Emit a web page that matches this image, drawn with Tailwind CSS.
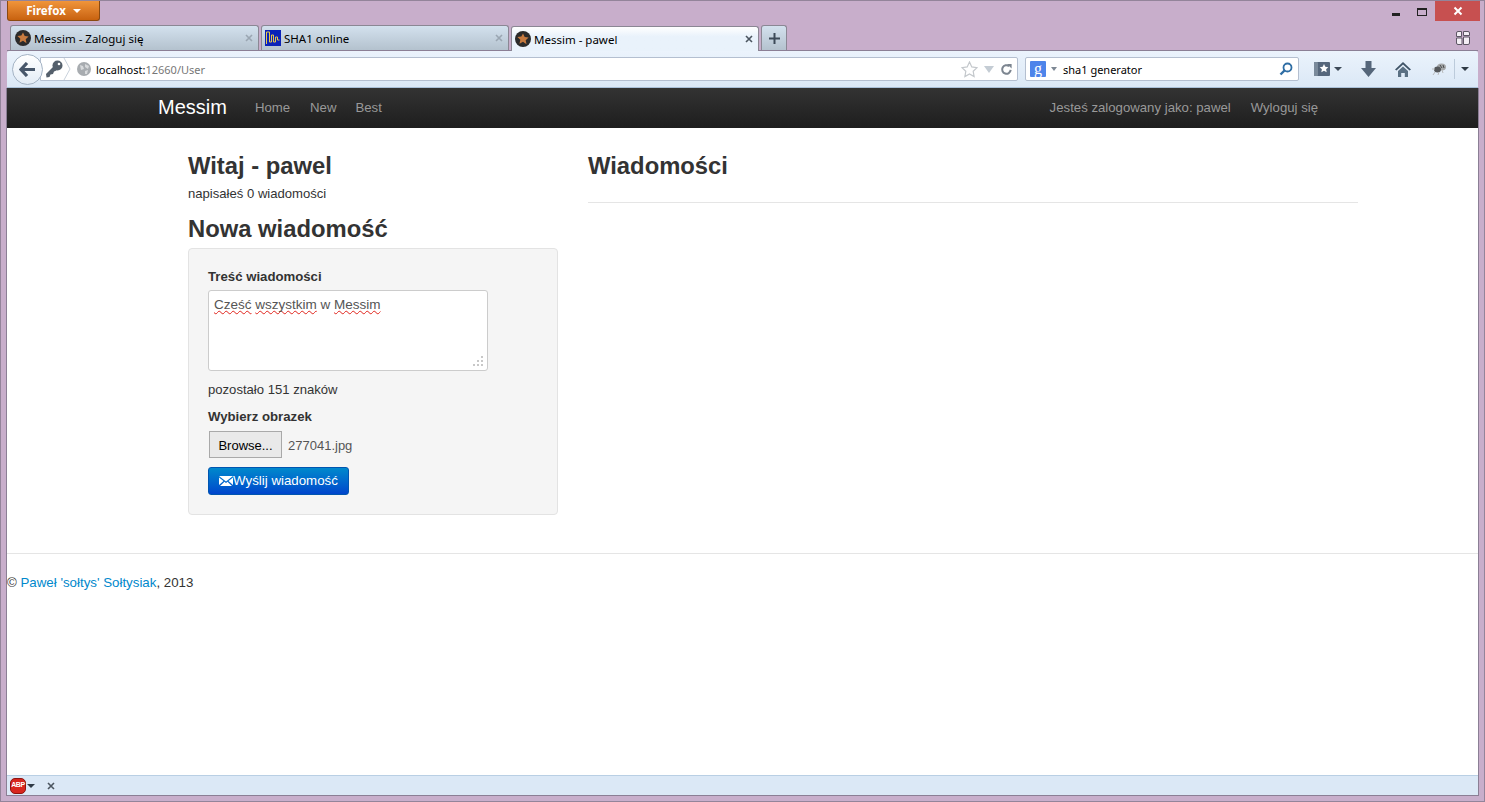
<!DOCTYPE html>
<html lang="en">
<head>
    <meta charset="UTF-8">
    <title>Messim - pawel</title>
    <script src="https://cdn.jsdelivr.net/npm/@tailwindcss/browser@4"></script>
</head>
<body class="h-screen overflow-hidden bg-[#c8aecb] font-['Liberation_Sans',sans-serif] text-[13.2px] text-[#333]">
    <div class="h-full flex flex-col border border-[#93849a] px-[6px] pb-[5px]">

        <!-- Title row -->
        <div class="h-[24px] flex items-start justify-between shrink-0">
            <div class="w-[93px] h-[20px] flex items-center justify-center gap-[7px] rounded-b-[3px] border border-t-0 border-[#8a4a10] bg-gradient-to-b from-[#f0953a] to-[#c8620e] font-['Noto_Sans',sans-serif] font-bold text-[11.5px] text-white">
                Firefox
                <span class="w-0 h-0 border-x-[4px] border-x-transparent border-t-[4px] border-t-white"></span>
            </div>
            <div class="flex items-start -mr-[2px]">
                <span class="w-[8px] h-[3px] bg-[#222] mt-[12px] mr-[17px]"></span>
                <span class="w-[10px] h-[8px] border border-t-[2px] border-[#222] mt-[7px] mr-[8px]"></span>
                <div class="w-[45px] h-[20px] bg-[#c75050] flex items-center justify-center">
                    <svg width="10" height="10" viewBox="0 0 10 10"><path d="M1.5 1.5l7 7M8.5 1.5l-7 7" stroke="#fff" stroke-width="2"/></svg>
                </div>
            </div>
        </div>

        <!-- Tabs -->
        <div class="h-[26px] flex items-end shrink-0 pl-[3px] gap-[2px] border-b border-[#8b7f95]">
            <div class="w-[249px] h-[25px] flex items-center pl-[4px] pr-[5px] rounded-t-[3px] border border-b-0 border-[#8b8794] bg-gradient-to-b from-[#d3e1ee] to-[#b4c2ce] font-['Noto_Sans',sans-serif] text-[11.5px] text-black">
                <svg width="16" height="16" viewBox="0 0 16 16" class="mr-[3px]"><circle cx="8" cy="8" r="8" fill="#2b2b2b"/><path d="M8 2.5l1.7 3.6 3.9.5-2.9 2.7.8 3.9L8 10.8l-3.5 1.9.8-3.9-2.9-2.7 3.9-.5z" fill="#c67a3f"/></svg>
                <span class="flex-1 pt-[2px]">Messim - Zaloguj się</span>
                <svg width="8" height="8" viewBox="0 0 8 8"><path d="M1 1l6 6M7 1L1 7" stroke="#9aa6b2" stroke-width="1.6"/></svg>
            </div>
            <div class="w-[248px] h-[25px] flex items-center pl-[3px] pr-[5px] rounded-t-[3px] border border-b-0 border-[#8b8794] bg-gradient-to-b from-[#d3e1ee] to-[#b4c2ce] font-['Noto_Sans',sans-serif] text-[11.5px] text-black">
                <svg width="16" height="16" viewBox="0 0 16 16" class="mr-[3px]"><rect width="16" height="16" fill="#0a22b8"/><path d="M1.500 14V2h3v10h2V5h2v7h2V7h2v3h2" fill="none" stroke="#e6c84a" stroke-width="1"/></svg>
                <span class="flex-1 pt-[2px]">SHA1 online</span>
                <svg width="8" height="8" viewBox="0 0 8 8"><path d="M1 1l6 6M7 1L1 7" stroke="#9aa6b2" stroke-width="1.6"/></svg>
            </div>
            <div class="w-[248px] h-[25px] -mb-px flex items-center pl-[3px] pr-[5px] rounded-t-[3px] border border-b-0 border-[#8b8794] bg-gradient-to-b from-white to-[#e9f2fb] to-40% font-['Noto_Sans',sans-serif] text-[11.5px] text-black">
                <svg width="16" height="16" viewBox="0 0 16 16" class="mr-[3px]"><circle cx="8" cy="8" r="8" fill="#2b2b2b"/><path d="M8 2.5l1.7 3.6 3.9.5-2.9 2.7.8 3.9L8 10.8l-3.5 1.9.8-3.9-2.9-2.7 3.9-.5z" fill="#c67a3f"/></svg>
                <span class="flex-1 pt-[2px]">Messim - pawel</span>
                <svg width="8" height="8" viewBox="0 0 8 8"><path d="M1 1l6 6M7 1L1 7" stroke="#4b5560" stroke-width="1.6"/></svg>
            </div>
            <div class="w-[26px] h-[25px] flex items-center justify-center rounded-t-[3px] border border-b-0 border-[#8b8794] bg-gradient-to-b from-[#d3e1ee] to-[#b4c2ce]">
                <svg width="11" height="11" viewBox="0 0 11 11"><path d="M5.5 0v11M0 5.5h11" stroke="#3d4a58" stroke-width="2"/></svg>
            </div>
            <div class="flex-1 h-full flex items-center justify-end pr-[8px]">
                <svg width="14" height="14" viewBox="0 0 14 14"><path d="M2 .5h3.500v5H.5V2A1.500 1.500 0 0 1 2 .5zM7.500 .5H12A1.500 1.500 0 0 1 13.500 2v2.500h-6zM.5 7H6v6.500H2A1.500 1.500 0 0 1 .5 12zM7.500 6H13.500v6a1.500 1.500 0 0 1-1.500 1.500H7.500z" fill="#f4eef5" stroke="#5d5664"/></svg>
            </div>
        </div>

        <!-- Navigation toolbar -->
        <div class="h-[37px] flex items-center shrink-0 pl-[5px] pr-[9px] rounded-t-[2px] bg-gradient-to-b from-[#ebf3fc] to-[#dbe8f6] border-b border-[#a9c0d8]">
            <div class="relative z-10 w-[31px] h-[31px] flex items-center justify-center rounded-full border border-[#a4b3c4] bg-gradient-to-b from-white to-[#e3ecf6] shrink-0">
                <svg width="17" height="15" viewBox="0 0 17 15"><path d="M8 1L2 7.500 8 14M2.500 7.500H16" fill="none" stroke="#47566a" stroke-width="3.200"/></svg>
            </div>
            <div class="w-[978px] h-[24px] -ml-[3px] flex items-center pl-[4px] pr-[4px] rounded-r-[2px] border border-[#b4bfd0] bg-white font-['Noto_Sans',sans-serif] text-[11px]">
                <svg width="18" height="18" viewBox="0 0 18 18"><circle cx="12.500" cy="5.500" r="5" fill="#55606c"/><path d="M9 6L1 14l.5 3.500 3-.5 1-2.500 2.500-.5 1-2.500 2.500-1z" fill="#55606c"/><circle cx="14" cy="4" r="1.300" fill="#fff"/></svg>
                <svg width="8" height="22" viewBox="0 0 8 22"><path d="M1 0l6 11-6 11" fill="none" stroke="#c9d2dc"/></svg>
                <svg width="14" height="14" viewBox="0 0 14 14" class="ml-[6px] mr-[5px]"><circle cx="7" cy="7" r="7" fill="#a8acb0"/><path d="M3 3l3 1 1 3-3 1zM8 2l4 2-1 3-3-2zM8 9l3-1-1 4-2 0z" fill="#d8dadc"/></svg>
                <span class="text-black pt-[2px]">localhost:</span><span class="text-[#777] pt-[2px]">12660/User</span>
                <div class="flex-1"></div>
                <svg width="17" height="17" viewBox="0 0 17 17"><path d="M8.500 1l2.300 4.900 5.200.7-3.800 3.700.9 5.300-4.600-2.600-4.600 2.600.9-5.300L1 6.600l5.200-.7z" fill="#fff" stroke="#c4c8cc" stroke-width="1.200"/></svg>
                <span class="ml-[6px] w-0 h-0 border-x-[5px] border-x-transparent border-t-[7px] border-t-[#c4ccd4]"></span>
                <svg width="13" height="13" viewBox="0 0 14 14" class="ml-[6px]"><path d="M11.500 7.500A4.600 4.600 0 1 1 9.800 3.400" fill="none" stroke="#7c8590" stroke-width="2.200"/><path d="M7.500 1h5v5z" fill="#7c8590"/></svg>
            </div>
            <div class="w-[274px] h-[24px] ml-[7px] flex items-center pl-[4px] pr-[5px] rounded-[2px] border border-[#b4bfd0] bg-white font-['Noto_Sans',sans-serif] text-[11px] text-black">
                <span class="w-[16px] h-[16px] flex items-center justify-center rounded-[1px] bg-[#4d84ea] font-['Liberation_Serif',serif] text-[16px] leading-none text-white">g</span>
                <span class="ml-[5px] mr-[6px] w-0 h-0 border-x-[3px] border-x-transparent border-t-[4px] border-t-[#7d8894]"></span>
                <span class="flex-1 pt-[2px]">sha1 generator</span>
                <svg width="14" height="14" viewBox="0 0 14 14"><circle cx="8.500" cy="5.500" r="4" fill="none" stroke="#2e6da4" stroke-width="1.800"/><path d="M5.500 8.500L1.500 12.500" stroke="#2e6da4" stroke-width="2.400"/></svg>
            </div>
            <div class="flex-1 flex items-center justify-end">
                <svg width="16" height="14" viewBox="0 0 16 14"><rect width="16" height="14" rx="1" fill="#56677c"/><rect width="4" height="14" rx="1" fill="#7a8a9b"/><path d="M10 2l1.300 2.800 3 .4-2.200 2.100.6 3L10 8.800l-2.700 1.500.6-3-2.200-2.100 3-.4z" fill="#fff"/></svg>
                <span class="ml-[4px] mr-[19px] w-0 h-0 border-x-[4px] border-x-transparent border-t-[4px] border-t-[#3d4a58]"></span>
                <svg width="15" height="16" viewBox="0 0 15 16" class="mr-[19px]"><path d="M4.500 0h6v7H15l-7.500 9L0 7h4.500z" fill="#55667a"/></svg>
                <svg width="16" height="15" viewBox="0 0 16 15" class="mr-[20px]"><path d="M8 0L0 7.500l1.500 1L8 2.500l6.500 6 1.500-1z" fill="#3f5467"/><path d="M3 9l5-4.500L13 9v6H9.800v-4H6.200v4H3z" fill="#5a7083"/></svg>
                <svg width="16" height="14" viewBox="0 0 16 14" class="mr-[7px]"><ellipse cx="10.500" cy="5" rx="4.500" ry="3.500" fill="#a5a8aa"/><ellipse cx="6.500" cy="7.500" rx="3.500" ry="3" fill="#55585b"/><path d="M9 3l2 3M12 3l1 3" stroke="#4a4c4e"/><path d="M1 7h3M4 10l-2 3M8 10l-1 3M11 8l1 3" stroke="#b8babc"/></svg>
                <span class="w-px h-[20px] bg-[#bccbdb] mr-[6px]"></span>
                <span class="w-0 h-0 border-x-[4px] border-x-transparent border-t-[4px] border-t-[#2f3a46]"></span>
            </div>
        </div>

        <!-- Page -->
        <div class="flex-1 min-h-0 flex flex-col bg-white border-x border-[#8b7f95] -mx-px">
            <nav class="h-[40px] shrink-0 flex items-center pl-[150px] pr-[160px] bg-gradient-to-b from-[#333] to-[#1e1e1e] text-[13.2px] text-[#999]">
                <span class="ml-px text-[20px] text-white mr-[28px] mb-[3px]">Messim</span>
                <a class="mr-[20px]">Home</a>
                <a class="mr-[19px]">New</a>
                <a>Best</a>
                <div class="flex-1"></div>
                <span class="mr-[20px]">Jesteś zalogowany jako: pawel</span>
                <a>Wyloguj się</a>
            </nav>

            <div class="flex gap-[30px] pl-[180px]">
                <div class="w-[370px] ml-px">
                    <h2 class="mt-[21px] text-[23.8px] leading-[34px] font-bold">Witaj - pawel</h2>
                    <p class="mt-px leading-[20px] text-[13.1px]">napisałeś 0 wiadomości</p>
                    <h2 class="mt-[8px] text-[23.8px] leading-[34px] font-bold">Nowa wiadomość</h2>
                    <div class="mt-[2px] h-[267px] pt-[18px] pl-[19px] rounded-[4px] border border-[#e3e3e3] bg-[#f5f5f5]">
                        <label class="block leading-[20px] font-bold">Treść wiadomości</label>
                        <div class="relative mt-[3px] w-[280px] h-[81px] px-[5px] py-[4px] rounded-[3px] border border-[#ccc] bg-white text-[13.5px] leading-[20px] text-[#555]">
                            <span class="underline decoration-wavy decoration-[#e0241c] decoration-1 [text-decoration-skip-ink:none]">Cześć</span>
                            <span class="underline decoration-wavy decoration-[#e0241c] decoration-1 [text-decoration-skip-ink:none]">wszystkim</span>
                            w
                            <span class="underline decoration-wavy decoration-[#e0241c] decoration-1 [text-decoration-skip-ink:none]">Messim</span>
                            <svg width="12" height="12" viewBox="0 0 12 12" class="absolute right-[3px] bottom-[3px]"><path d="M9 1h2v2H9zM5 5h2v2H5zM9 5h2v2H9zM1 9h2v2H1zM5 9h2v2H5zM9 9h2v2H9z" fill="#c8c8c8"/></svg>
                        </div>
                        <p class="mt-[9px] leading-[20px] text-[13.1px]">pozostało 151 znaków</p>
                        <label class="block mt-[7px] leading-[20px] font-bold">Wybierz obrazek</label>
                        <div class="mt-[4px] ml-px h-[27px] flex items-center text-[13px] text-[#555]">
                            <button class="w-[73px] h-[27px] pt-[2px] border border-[#a9a9a9] bg-[#e9e9e9] text-[13px] text-black">Browse...</button>
                            <span class="ml-[6px] pt-[2px]">277041.jpg</span>
                        </div>
                        <button class="mt-[9px] w-[141px] h-[28px] flex items-center justify-center rounded-[3px] border border-[#0055b0] bg-gradient-to-b from-[#0088cc] to-[#0044cc] text-[13.3px] text-white">
                            <svg width="14" height="10" viewBox="0 0 14 10"><path d="M0 0h14L7 5.500zM0 1.500V9l4.500-4zM14 1.500V9L9.500 5zM1 10l4.500-4.200L7 7l1.500-1.200L13 10z" fill="#fff"/></svg>
                            <span>Wyślij wiadomość</span>
                        </button>
                    </div>
                </div>
                <div class="w-[770px]">
                    <h2 class="mt-[21px] text-[23.8px] leading-[34px] font-bold">Wiadomości</h2>
                    <div class="mt-[19px] border-t border-[#e5e5e5]"></div>
                </div>
            </div>

            <footer class="mt-[38px] border-t border-[#e5e5e5] pt-[19px] leading-[20px] text-[13.3px]">
                © <a class="text-[#0088cc]">Paweł 'sołtys' Sołtysiak</a>, 2013
            </footer>
            <div class="flex-1"></div>

            <!-- Status bar -->
            <div class="h-[20px] shrink-0 flex items-center pl-[3px] bg-[#dbe8f6] border-t border-[#b9cfe4]">
                <span class="w-[16px] h-[16px] flex items-center justify-center rounded-[5px] border border-[#8e1410] bg-[#d8261f] font-bold text-[7px] tracking-tighter text-white">ABP</span>
                <span class="ml-[1px] w-0 h-0 border-x-[4px] border-x-transparent border-t-[4px] border-t-[#2f3a46]"></span>
                <svg width="8" height="8" viewBox="0 0 8 8" class="ml-[12px]"><path d="M1 1l6 6M7 1L1 7" stroke="#4b5560" stroke-width="1.600"/></svg>
            </div>
        </div>
        <div class="h-px -mx-px shrink-0 bg-[#8b7f95]"></div>
    </div>
</body>
</html>
